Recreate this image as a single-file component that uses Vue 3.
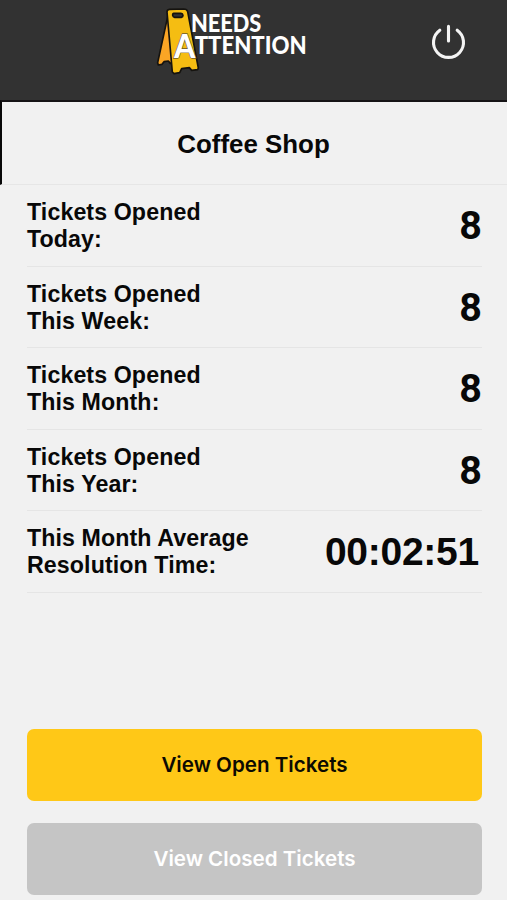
<template>
    <div class="screen">
        <header class="header">
            <svg class="logo" viewBox="0 0 525 255" role="img" aria-label="Needs Attention">
                <path class="sign-back" d="M68 50 L38 188 L40 195 L51 193 L57 185 L70 183 L76 190 L84 188 L80 60 Z" />
                <path class="sign-front" d="M66 36 Q66 29 73 28 L116 27 Q126 27 128 35 L160 204 L158 209 L140 211 L133 203 L110 206 L104 218 L87 221 L82 216 Z" />
                <path class="sign-hole" d="M86 40 H108 Q113 40 114 46 Q114 51 109 52 H89 Q84 51 83 46 Q83 40 86 40 Z" />
                <text class="word" x="138" y="97" textLength="211" lengthAdjust="spacingAndGlyphs">NEEDS</text>
                <text class="word" x="149" y="161" textLength="336" lengthAdjust="spacingAndGlyphs">TTENTION</text>
                <text class="big-a" x="87" y="175" textLength="64" lengthAdjust="spacingAndGlyphs">A</text>
            </svg>
            <button class="power-button" aria-label="Log out">
                <svg viewBox="0 0 36 36">
                    <path d="M9.8 6.2 A15 15 0 1 0 27.2 6.2 M18.5 2.4 V17" />
                </svg>
            </button>
        </header>

        <h1 class="title">{{ location }}</h1>

        <ul class="stats">
            <li v-for="stat in stats" :key="stat.second" class="stat">
                <span class="stat-label">{{ stat.first }}<br />{{ stat.second }}</span>
                <span class="stat-value" :class="{ time: stat.isTime }">{{ stat.value }}</span>
            </li>
        </ul>

        <div class="actions">
            <button class="action open">View Open Tickets</button>
            <button class="action closed">View Closed Tickets</button>
        </div>
    </div>
</template>

<script setup>
import { ref } from 'vue';

const location = ref('Coffee Shop');

const stats = ref([
    { first: 'Tickets Opened', second: 'Today:', value: '8' },
    { first: 'Tickets Opened', second: 'This Week:', value: '8' },
    { first: 'Tickets Opened', second: 'This Month:', value: '8' },
    { first: 'Tickets Opened', second: 'This Year:', value: '8' },
    { first: 'This Month Average', second: 'Resolution Time:', value: '00:02:51', isTime: true }
]);
</script>

<style>
    body {
        margin: 0;
        background-color: #f1f1f1;
    }
</style>

<style scoped>
    .screen {
        box-sizing: border-box;
        height: 900px;
        display: flex;
        flex-direction: column;
        overflow: hidden;
        background-color: #f1f1f1;
        color: #080808;
        font-family: "Liberation Sans", Arial, sans-serif;
    }

    .header {
        flex: none;
        box-sizing: border-box;
        height: 100px;
        padding: 0 41px 0 145px;
        display: flex;
        justify-content: space-between;
        align-items: flex-start;
        background-color: #323232;
    }

    .logo {
        width: 175px;
        height: 85px;
    }

    .sign-back,
    .sign-front {
        stroke: #15130f;
        stroke-width: 5;
        stroke-linejoin: round;
    }

    .sign-back {
        fill: #fba525;
    }

    .sign-front {
        fill: #f5bd12;
    }

    .sign-hole {
        fill: #323232;
        stroke: #15130f;
        stroke-width: 5;
    }

    .word {
        fill: #fff;
        font-family: Lato, sans-serif;
        font-size: 72px;
        font-weight: 900;
    }

    .big-a {
        fill: #fff;
        stroke: #6b5a2c;
        stroke-width: 4;
        paint-order: stroke;
        font-family: Lato, sans-serif;
        font-size: 98px;
        font-weight: 900;
    }

    .power-button {
        margin-top: 24px;
        padding: 0;
        border: none;
        background: none;
        cursor: pointer;
    }

    .power-button svg {
        display: block;
        width: 36px;
        height: 36px;
        fill: none;
        stroke: #f4f4f4;
        stroke-width: 3.1;
        stroke-linecap: round;
    }

    .title {
        flex: none;
        box-sizing: border-box;
        height: 85px;
        margin: 0;
        padding-right: 2px;
        border-top: 2px solid #161416;
        border-left: 2px solid #080808;
        border-bottom: 1px solid #e6e6e6;
        text-align: center;
        font-size: 25.9px;
        font-weight: bold;
        line-height: 84px;
    }

    .stats {
        flex: none;
        margin: 0 25px 0 27px;
        padding: 0;
        list-style: none;
    }

    .stat {
        box-sizing: border-box;
        height: 81.5px;
        display: flex;
        justify-content: space-between;
        align-items: center;
        border-bottom: 1px solid #e5e5e5;
    }

    .stat-label {
        padding-top: 2px;
        font-size: 23.2px;
        font-weight: bold;
        line-height: 27px;
        letter-spacing: 0.1px;
    }

    .stat-value {
        padding-top: 2px;
        font-family: Roboto, sans-serif;
        font-size: 39.5px;
        font-weight: 700;
        line-height: 44px;
    }

    .stat-value.time {
        padding-right: 3px;
        font-family: "Liberation Sans", Arial, sans-serif;
        font-size: 39px;
        letter-spacing: -0.25px;
    }

    .actions {
        flex: none;
        margin: 136.5px 25px 0 27px;
        display: flex;
        flex-direction: column;
        gap: 22.5px;
    }

    .action {
        height: 71.5px;
        padding: 0;
        border: none;
        border-radius: 7px;
        font-family: Inter, sans-serif;
        font-size: 20.6px;
        font-weight: 600;
        cursor: pointer;
    }

    .open {
        background-color: #ffc817;
        color: #0c0a02;
    }

    .closed {
        background-color: #c5c5c5;
        color: #fff;
    }
</style>
